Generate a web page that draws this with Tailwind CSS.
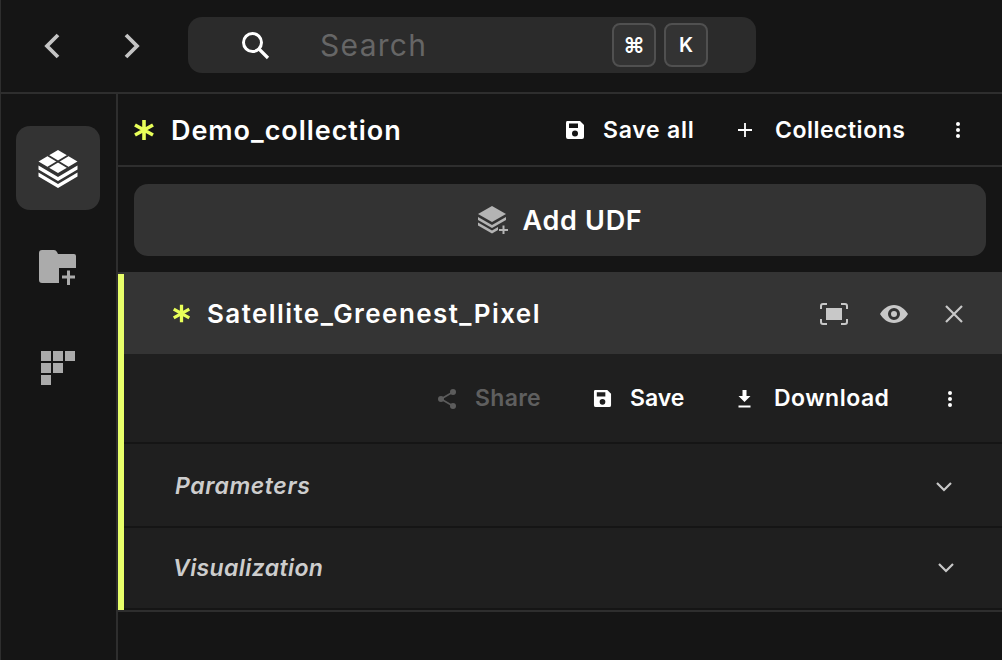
<!doctype html>
<html><head><meta charset="utf-8"><script src="https://cdn.jsdelivr.net/npm/@tailwindcss/browser@4"></script></head>
<body class="m-0 bg-[#151515]">
<div class="w-[1002px] h-[660px] overflow-hidden flex flex-col bg-[#151515] border-l border-[#2e2e2e] font-['Inter','Liberation_Sans',sans-serif] text-white">
  <header class="h-[94px] shrink-0 border-b-2 border-[#2e2e2e] flex items-start">
    <div class="w-[187px] shrink-0 h-[92px] flex items-center">
      <svg class="ml-[41px] w-[20px] h-[26px]" viewBox="0 0 20 26" fill="none" stroke="#c4c4c4" stroke-width="3.800"><path d="M16 2 L5 13 L16 24" /></svg>
      <svg class="ml-[60px] w-[20px] h-[26px]" viewBox="0 0 20 26" fill="none" stroke="#c4c4c4" stroke-width="3.800"><path d="M4 2 L15 13 L4 24" /></svg>
    </div>
    <div class="mt-[17px] w-[568px] h-[56px] rounded-[14px] bg-[#2b2b2b] flex items-center">
      <svg class="ml-[50px] w-[32px] h-[32px]" viewBox="0 0 32 32" fill="none" stroke="#fff"><circle cx="14.500" cy="13.500" r="9" stroke-width="3"/><path d="M21 20 L30 29" stroke-width="3.200"/></svg>
      <span class="ml-[50px] w-[292px] text-[30px] leading-none text-[#666666] tracking-[1.300px]">Search</span>
      <span class="w-[44px] h-[44px] rounded-[8px] bg-[#333333] border-2 border-[#505050] flex items-center justify-center text-[22px] font-semibold">⌘</span>
      <span class="ml-[8px] w-[44px] h-[44px] rounded-[8px] bg-[#333333] border-2 border-[#505050] flex items-center justify-center text-[20px] font-semibold">K</span>
    </div>
  </header>
  <div class="flex-1 flex min-h-0">
    <aside class="w-[115px] shrink-0 flex flex-col items-center pt-[32px] pr-[2px]">
      <div class="w-[84px] h-[84px] rounded-[14px] bg-[#333333] flex items-center justify-center">
        <svg class="w-[40px] h-[38px] mt-[2px]" viewBox="0 0 39 38" fill="#fff"><path d="M19.500 0 L39 11.500 L19.500 23 L0 11.500Z"/><path d="M9.500 5.500 L29.500 17.500 M29.500 5.500 L9.500 17.500" stroke="#333333" stroke-width="2" fill="none"/><path d="M0 15.500 L19.500 27 L39 15.500 V19.500 L19.500 31 L0 19.500Z M0 22.500 L19.500 34 L39 22.500 V26.500 L19.500 38 L0 26.500Z"/></svg>
      </div>
      <svg class="mt-[40px] w-[37px] h-[36px]" viewBox="0 0 37 36"><path d="M3 0 H15 Q17 0 18 2 L19 4 H35 Q37 4 37 6 V31 Q37 33 35 33 H3 Q0 33 0 30 V3 Q0 0 3 0Z" fill="#ababab"/><rect x="20" y="18" width="17" height="18" fill="#151515"/><path d="M23 25.500 H28 V20.500 H31 V25.500 H36 V28.500 H31 V35 H28 V28.500 H23Z" fill="#ababab"/></svg>
      <div class="mt-[65px] grid grid-cols-[repeat(3,10px)] auto-rows-[10px] gap-[2px] w-[34px]">
        <i class="bg-[#ababab]"></i><i class="bg-[#ababab]"></i><i class="bg-[#ababab]"></i>
        <i class="bg-[#ababab]"></i><i class="bg-[#ababab]"></i><i></i>
        <i class="bg-[#ababab]"></i>
      </div>
    </aside>
    <main class="w-[886px] shrink-0 border-l-2 border-[#2e2e2e] flex flex-col">
      <div class="h-[73px] shrink-0 pt-[1px] border-b-2 border-[#2e2e2e] flex items-center">
        <svg class="ml-[15px] w-[22px] h-[22px]" viewBox="0 0 22 22" stroke="#e8ff59" stroke-width="3.600" fill="none"><path d="M11 1 V21 M2 6 L20 16 M20 6 L2 16"/></svg>
        <span class="ml-[16px] w-[394px] text-[27px] font-semibold leading-none tracking-[0.950px]">Demo_collection</span>
        <svg class="w-[20px] h-[20px]" viewBox="0 0 20 20" fill="#fff"><path fill-rule="evenodd" d="M2 1 H15 L19 5 V17 Q19 19 17 19 H3 Q1 19 1 17 V3 Q1 1 2 1Z M4 3.500 V8 H13 V3.500Z M10 10.500 A3 3 0 1 0 10 16.500 A3 3 0 1 0 10 10.500Z"/></svg>
        <span class="ml-[18px] w-[134px] text-[23px] font-semibold leading-none tracking-[0.750px]">Save all</span>
        <svg class="w-[16px] h-[16px]" viewBox="0 0 16 16" stroke="#fff" stroke-width="1.800"><path d="M8 1 V15 M1 8 H15"/></svg>
        <span class="ml-[22px] w-[180px] text-[23px] font-semibold leading-none tracking-[0.500px]">Collections</span>
        <svg class="w-[6px] h-[18px]" viewBox="0 0 6 18" fill="#fff"><circle cx="3" cy="3" r="2"/><circle cx="3" cy="9" r="2"/><circle cx="3" cy="15" r="2"/></svg>
      </div>
      <div class="ml-[16px] mt-[17px] w-[852px] h-[72px] rounded-[14px] bg-[#333333] flex items-center justify-center">
        <svg class="w-[30px] h-[28px]" viewBox="0 0 30 28" fill="#b4b4b4"><path d="M14 0 L28 8 L14 16 L0 8Z"/><path d="M0 11 L14 19 L28 11 V14 L14 22 L0 14Z M0 16.500 L14 24.500 L20 21 V24 L14 27.500 L0 19.500Z"/><path d="M21 23 H30 V25 H21Z M24.500 19.500 H26.500 V28 H24.500Z"/></svg>
        <span class="ml-[15px] text-[27px] font-semibold leading-none tracking-[0.700px]">Add UDF</span>
      </div>
      <section class="mt-[16px] w-[885px] border-b-2 border-[#2e2e2e]">
        <div class="h-[82px] pt-[1px] bg-[#343434] pl-[6px] relative flex items-center">
          <i class="absolute left-0 top-[2px] bottom-0 w-[6px] bg-[#e8ff6a]"></i>
          <svg class="ml-[48px] w-[19px] h-[19px]" viewBox="0 0 22 22" stroke="#e8ff59" stroke-width="3.800" fill="none"><path d="M11 1 V21 M2 6 L20 16 M20 6 L2 16"/></svg>
          <span class="ml-[16px] w-[613px] text-[26px] font-semibold leading-none tracking-[1.420px]">Satellite_Greenest_Pixel</span>
          <svg class="w-[28px] h-[22px]" viewBox="0 0 28 22" fill="none" stroke="#c8c8c8" stroke-width="2"><path d="M1 6 V3 Q1 1 3 1 H7 M21 1 H25 Q27 1 27 3 V6 M1 16 V19 Q1 21 3 21 H7 M21 21 H25 Q27 21 27 19 V16"/><rect x="6" y="5" width="16" height="12" fill="#c8c8c8" stroke="none"/></svg>
          <svg class="ml-[32px] w-[28px] h-[20px]" viewBox="0 0 28 20" fill="#c8c8c8"><path fill-rule="evenodd" d="M14 1 C20 1 25 5 28 10 C25 15 20 19 14 19 C8 19 3 15 0 10 C3 5 8 1 14 1Z M14 4 A6 6 0 1 0 14 16 A6 6 0 1 0 14 4Z M14 7 A3 3 0 1 1 14 13 A3 3 0 1 1 14 7Z"/></svg>
          <svg class="ml-[36px] w-[20px] h-[20px]" viewBox="0 0 20 20" stroke="#c8c8c8" stroke-width="2.200"><path d="M2 2 L18 18 M18 2 L2 18"/></svg>
        </div>
        <div class="h-[90px] pt-[1px] border-b-2 border-[#151515] bg-[#1f1f1f] pl-[6px] relative flex items-center">
          <i class="absolute left-0 top-0 bottom-[-2px] w-[6px] bg-[#e8ff6a]"></i>
          <svg class="ml-[313px] w-[20px] h-[22px]" viewBox="0 0 20 22" fill="#5c5c5c"><circle cx="16" cy="4" r="3"/><circle cx="4" cy="11" r="3"/><circle cx="16" cy="18" r="3"/><path d="M4 11 L16 4 M4 11 L16 18" stroke="#5c5c5c" stroke-width="1.600"/></svg>
          <span class="ml-[18px] w-[118px] text-[23px] font-semibold leading-none tracking-[0.300px] text-[#5f5f5f]">Share</span>
          <svg class="w-[19px] h-[19px]" viewBox="0 0 20 20" fill="#fff"><path fill-rule="evenodd" d="M2 1 H15 L19 5 V17 Q19 19 17 19 H3 Q1 19 1 17 V3 Q1 1 2 1Z M4 3.500 V8 H13 V3.500Z M10 10.500 A3 3 0 1 0 10 16.500 A3 3 0 1 0 10 10.500Z"/></svg>
          <span class="ml-[18px] w-[107px] text-[23px] font-semibold leading-none">Save</span>
          <svg class="w-[15px] h-[18px]" viewBox="0 0 14 18" fill="#fff"><path d="M5 0 H9 V6 H13 L7 12 L1 6 H5Z M1 15.500 H13 V17.500 H1Z"/></svg>
          <span class="ml-[22px] w-[173px] text-[23px] font-semibold leading-none tracking-[0.500px]">Download</span>
          <svg class="w-[6px] h-[18px]" viewBox="0 0 6 18" fill="#fff"><circle cx="3" cy="3" r="2"/><circle cx="3" cy="9" r="2"/><circle cx="3" cy="15" r="2"/></svg>
        </div>
        <div class="h-[84px] pt-[3px] border-b-2 border-[#151515] bg-[#1f1f1f] pl-[6px] relative flex items-center">
          <i class="absolute left-0 top-0 bottom-[-2px] w-[6px] bg-[#e8ff6a]"></i>
          <span class="ml-[51px] w-[761px] text-[23px] font-semibold italic leading-none tracking-[0.600px] text-[#cdcdcd]">Parameters</span>
          <svg class="w-[16px] h-[10px]" viewBox="0 0 16 10" fill="none" stroke="#c8c8c8" stroke-width="2.200"><path d="M1 1 L8 8 L15 1"/></svg>
        </div>
        <div class="h-[82px] border-b-2 border-[#151515] bg-[#1f1f1f] pl-[6px] relative flex items-center">
          <i class="absolute left-0 top-0 bottom-[-2px] w-[6px] bg-[#e8ff6a]"></i>
          <span class="ml-[49px] w-[765px] text-[23px] font-semibold italic leading-none tracking-[0.400px] text-[#cdcdcd]">Visualization</span>
          <svg class="w-[16px] h-[10px]" viewBox="0 0 16 10" fill="none" stroke="#c8c8c8" stroke-width="2.200"><path d="M1 1 L8 8 L15 1"/></svg>
        </div>
      </section>
    </main>
  </div>
</div>
</body></html>
